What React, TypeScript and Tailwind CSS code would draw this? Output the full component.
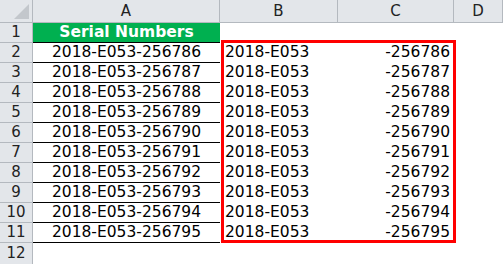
const COLS = ['A', 'B', 'C', 'D']
const SERIALS = Array.from({ length: 10 }, (_, i) => `2018-E053-${256786 + i}`)

const font = { fontFamily: '"DejaVu Sans", Verdana, sans-serif' }

const App = () => {
  return (
    <div className="relative w-[503px] h-[264px] overflow-hidden bg-white text-black" style={font}>
      <div className="grid grid-cols-[33px_187px_118px_116px_49px] grid-rows-[23px_repeat(11,20px)_21px]">
        {/* corner */}
        <div className="relative bg-[#e3e6ea] border-r border-b border-[#b4b9bf]">
          <div className="absolute right-[3px] bottom-[3px] w-0 h-0 border-l-[15px] border-l-transparent border-b-[15px] border-b-[#c3c7cc]" />
        </div>
        {COLS.map(c => (
          <div
            key={c}
            className="flex items-center justify-center bg-[#e3e6ea] border-r border-b border-[#b4b9bf] text-[15px] text-[#222]"
          >
            {c}
          </div>
        ))}

        {/* row 1 */}
        <div className="flex items-center justify-center bg-[#e3e6ea] border-r border-b border-[#b4b9bf] text-[15px] text-[#222]">1</div>
        <div className="flex items-center justify-center bg-[#00b050] text-white font-bold text-[15.5px] border-b border-black">
          Serial Numbers
        </div>
        <div />
        <div />
        <div />

        {SERIALS.map((s, i) => (
          <div key={s} className="contents">
            <div className="flex items-center justify-center bg-[#e3e6ea] border-r border-b border-[#b4b9bf] text-[15px] text-[#222]">
              {i + 2}
            </div>
            <div className="flex items-center justify-center border-b border-black text-[15.5px]">{s}</div>
            <div className="flex items-center pl-[5px] text-[15.5px]">2018-E053</div>
            <div className="flex items-center justify-end pr-[4px] text-[15.5px]">-{256786 + i}</div>
            <div />
          </div>
        ))}

        <div className="flex items-center justify-center bg-[#e3e6ea] border-r border-[#b4b9bf] text-[15px] text-[#222]">12</div>
        <div />
        <div />
        <div />
        <div />
      </div>

      {/* red highlight */}
      <div className="absolute left-[221px] top-[40px] w-[235px] h-[203px] border-[3px] border-[#ff0000]" />
    </div>
  )
}

export default App
